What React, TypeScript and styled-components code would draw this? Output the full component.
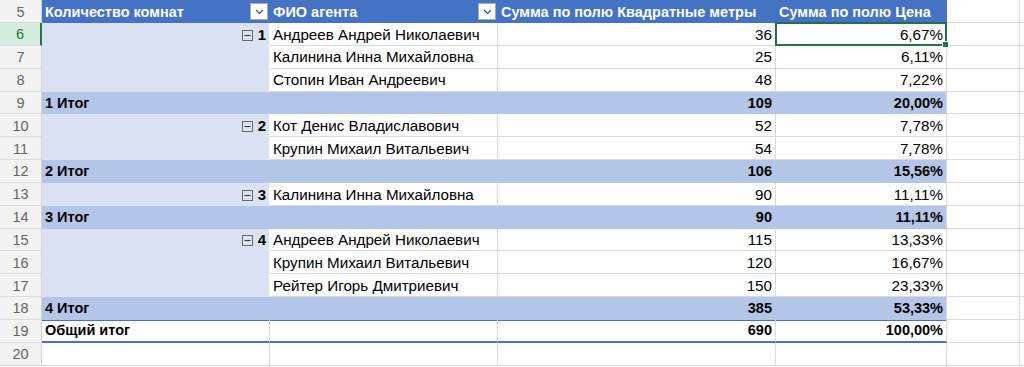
import React from "react";
import styled, { createGlobalStyle } from "styled-components";

const GRID = "#DADADA";
const HEAD_BLUE = "#4472C4";
const LABEL_BLUE = "#D9E1F2";
const TOTAL_BLUE = "#B4C6E7";
const GREEN = "#217346";
const COLS = "42px 228px 228px 278px 171px 73px 1fr";
const ROW_H = 22.85;
const BOLD_SIZE = "14.5px";

const Global = createGlobalStyle`
  html, body { margin: 0; padding: 0; background: #fff; }
  body {
    font-family: "Liberation Sans", Arial, sans-serif;
    font-size: 15.2px;
    color: #000;
    overflow: hidden;
  }
`;

const Sheet = styled.div`
  display: flex;
  flex-direction: column;
  width: 1024px;
  height: 367px;
  overflow: hidden;
`;

const Row = styled.div<{ $h: number }>`
  display: grid;
  grid-template-columns: ${COLS};
  height: ${(p) => p.$h}px;
  flex: none;
`;

const BaseCell = styled.div`
  position: relative;
  box-sizing: border-box;
  min-width: 0;
  display: flex;
  align-items: flex-end;
  white-space: nowrap;
  line-height: 1;
  padding: 0 3px 3px 3px;
  border-right: 1px solid ${GRID};
  border-bottom: 1px solid ${GRID};
  background: #fff;
`;

const RowNum = styled(BaseCell)<{ $sel?: boolean }>`
  justify-content: center;
  padding: 0 0 3px 0;
  font-size: 14.5px;
  color: ${(p) => (p.$sel ? GREEN : "#666")};
  background: ${(p) => (p.$sel ? "#D3EEDD" : "#F3F3F3")};
  border-bottom-color: #DCDCDC;
  border-right: ${(p) => (p.$sel ? `2px solid ${GREEN}` : "1px solid #D0D0D0")};
`;

const HeaderCell = styled(BaseCell)`
  background: ${HEAD_BLUE};
  color: #fff;
  font-weight: 700;
  font-size: ${BOLD_SIZE};
  justify-content: space-between;
  border-right-color: ${HEAD_BLUE};
  border-bottom-color: ${HEAD_BLUE};
  padding-right: 1px;
`;

const FilterButton = styled.span`
  flex: none;
  width: 18px;
  height: 17px;
  box-sizing: border-box;
  margin-bottom: -1px;
  background: #fff;
  border: 1px solid #A9A9A9;
  display: flex;
  align-items: center;
  justify-content: center;
`;

const LabelCell = styled(BaseCell)`
  background: ${LABEL_BLUE};
  justify-content: flex-end;
  font-weight: 700;
  font-size: 15px;
  gap: 5px;
  border-right-color: #fff;
  border-bottom-color: ${LABEL_BLUE};
`;

const CollapseIcon = styled.svg`
  flex: none;
  margin-bottom: 1px;
`;

const NameCell = styled(BaseCell)``;

const NumCell = styled(BaseCell)`
  justify-content: flex-end;
`;

const Selection = styled.span`
  position: absolute;
  z-index: 2;
  top: -1px;
  left: -1px;
  right: -1px;
  bottom: -1px;
  border: 2px solid ${GREEN};
  pointer-events: none;
`;

const FillHandle = styled.span`
  position: absolute;
  z-index: 3;
  right: -4px;
  bottom: -4px;
  width: 5px;
  height: 5px;
  background: ${GREEN};
  border: 1px solid #fff;
`;

const TotalLabel = styled(BaseCell)`
  grid-column: span 2;
  background: ${TOTAL_BLUE};
  font-weight: 700;
  font-size: ${BOLD_SIZE};
  border-right-color: ${TOTAL_BLUE};
  border-bottom-color: ${TOTAL_BLUE};
`;

const TotalNum = styled(BaseCell)<{ $last?: boolean }>`
  background: ${TOTAL_BLUE};
  font-weight: 700;
  font-size: ${BOLD_SIZE};
  justify-content: flex-end;
  border-right-color: ${(p) => (p.$last ? GRID : TOTAL_BLUE)};
  border-bottom-color: ${TOTAL_BLUE};
`;

const GrandCell = styled(BaseCell)<{ $right?: boolean }>`
  font-weight: 700;
  font-size: ${BOLD_SIZE};
  justify-content: ${(p) => (p.$right ? "flex-end" : "flex-start")};
  box-shadow: inset 0 1px 0 ${HEAD_BLUE};
  border-bottom: 2px solid ${HEAD_BLUE};
`;

const EmptyCell = styled(BaseCell)<{ $edge?: boolean }>`
  border-right-color: ${(p) => (p.$edge ? "transparent" : GRID)};
`;

type Person = [string, number, string];
type Group = { n: number; rows: Person[]; total: [number, string] };

const groups: Group[] = [
  {
    n: 1,
    rows: [
      ["Андреев Андрей Николаевич", 36, "6,67%"],
      ["Калинина Инна Михайловна", 25, "6,11%"],
      ["Стопин Иван Андреевич", 48, "7,22%"],
    ],
    total: [109, "20,00%"],
  },
  {
    n: 2,
    rows: [
      ["Кот Денис Владиславович", 52, "7,78%"],
      ["Крупин Михаил Витальевич", 54, "7,78%"],
    ],
    total: [106, "15,56%"],
  },
  {
    n: 3,
    rows: [["Калинина Инна Михайловна", 90, "11,11%"]],
    total: [90, "11,11%"],
  },
  {
    n: 4,
    rows: [
      ["Андреев Андрей Николаевич", 115, "13,33%"],
      ["Крупин Михаил Витальевич", 120, "16,67%"],
      ["Рейтер Игорь Дмитриевич", 150, "23,33%"],
    ],
    total: [385, "53,33%"],
  },
];

const Chevron = () => (
  <svg width="9" height="6" viewBox="0 0 9 6">
    <path d="M1 1 L4.5 4.5 L8 1" fill="none" stroke="#505050" strokeWidth="1.2" />
  </svg>
);

const Minus = () => (
  <CollapseIcon width="11" height="11" viewBox="0 0 11 11">
    <rect x="0.5" y="0.5" width="10" height="10" fill="none" stroke="#6A6A6A" strokeWidth="1" />
    <line x1="2.5" y1="5.5" x2="8.5" y2="5.5" stroke="#333" strokeWidth="1" />
  </CollapseIcon>
);

const Tail = () => (
  <>
    <EmptyCell />
    <EmptyCell $edge />
  </>
);

export default function App() {
  let rowNo = 6;
  const body: React.ReactNode[] = [];

  groups.forEach((g) => {
    g.rows.forEach((r, i) => {
      const n = rowNo++;
      const selected = n === 6;
      body.push(
        <Row $h={ROW_H} key={`r${n}`}>
          <RowNum $sel={selected}>{n}</RowNum>
          <LabelCell>
            {i === 0 && (
              <>
                <Minus />
                <span>{g.n}</span>
              </>
            )}
          </LabelCell>
          <NameCell>{r[0]}</NameCell>
          <NumCell>{r[1]}</NumCell>
          <NumCell>
            {r[2]}
            {selected && (
              <Selection>
                <FillHandle />
              </Selection>
            )}
          </NumCell>
          <Tail />
        </Row>
      );
    });
    const t = rowNo++;
    body.push(
      <Row $h={ROW_H} key={`t${t}`}>
        <RowNum>{t}</RowNum>
        <TotalLabel>{g.n} Итог</TotalLabel>
        <TotalNum>{g.total[0]}</TotalNum>
        <TotalNum $last>{g.total[1]}</TotalNum>
        <Tail />
      </Row>
    );
  });

  return (
    <>
      <Global />
      <Sheet>
        <Row $h={23}>
          <RowNum>5</RowNum>
          <HeaderCell>
            <span>Количество комнат</span>
            <FilterButton>
              <Chevron />
            </FilterButton>
          </HeaderCell>
          <HeaderCell>
            <span>ФИО агента</span>
            <FilterButton>
              <Chevron />
            </FilterButton>
          </HeaderCell>
          <HeaderCell>Сумма по полю Квадратные метры</HeaderCell>
          <HeaderCell>Сумма по полю Цена</HeaderCell>
          <Tail />
        </Row>
        {body}
        <Row $h={ROW_H}>
          <RowNum>19</RowNum>
          <GrandCell>Общий итог</GrandCell>
          <GrandCell />
          <GrandCell $right>690</GrandCell>
          <GrandCell $right>100,00%</GrandCell>
          <Tail />
        </Row>
        <Row $h={ROW_H}>
          <RowNum>20</RowNum>
          <EmptyCell />
          <EmptyCell />
          <EmptyCell />
          <EmptyCell />
          <Tail />
        </Row>
      </Sheet>
    </>
  );
}
